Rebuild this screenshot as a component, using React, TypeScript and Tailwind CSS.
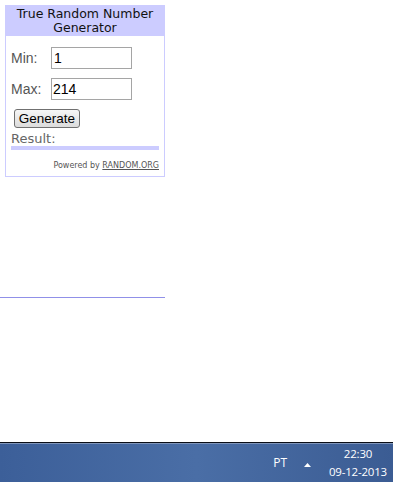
import React from "react";

function Taskbar() {
  return (
    <div className="h-[40px] w-full flex flex-col">
      <div className="h-[1px] bg-[#0b0f17]" />
      <div className="h-[1px] bg-[#7f95bb]" />
      <div className="flex-1 bg-gradient-to-r from-[#3c5f99] via-[#4a6ea6] to-[#3b5c93] flex items-center justify-end pr-[6px] text-white font-['Open_Sans',sans-serif] text-[11.5px]">
        <span className="mr-[17px] text-[12px]">PT</span>
        <svg width="7" height="5" viewBox="0 0 7 5" className="mr-[18px] mt-[5px]">
          <polygon points="3.5,0 7,4 0,4" fill="#ffffff" />
        </svg>
        <div className="flex flex-col items-center leading-[18px] tracking-[-0.2px]">
          <span>22:30</span>
          <span>09-12-2013</span>
        </div>
      </div>
    </div>
  );
}

export default function App() {
  return (
    <div className="w-[393px] h-[482px] bg-white flex flex-col relative overflow-hidden">
      <div className="pt-[5px] pl-[5px]">
        <div className="w-[160px] h-[172px] border border-[#ccccff] flex flex-col">
          <div className="bg-[#ccccff] h-[30px] text-center text-[12.5px] leading-[13.5px] text-[#111] pt-[1px] font-['DejaVu_Sans',Verdana,sans-serif]">
            <div>True Random Number</div>
            <div>Generator</div>
          </div>
          <div className="flex flex-col px-[5px] font-['Liberation_Sans',Arial,sans-serif]">
            <div className="flex items-center mt-[11px] h-[22px]">
              <span className="w-[40px] text-[14px] text-[#555]">Min:</span>
              <div className="w-[81px] h-[22px] border border-[#a5a5a5] bg-white text-[14px] text-black pl-[2px] leading-[20px]">
                1
              </div>
            </div>
            <div className="flex items-center mt-[9px] h-[22px]">
              <span className="w-[40px] text-[14px] text-[#555]">Max:</span>
              <div className="w-[81px] h-[22px] border border-[#a5a5a5] bg-white text-[14px] text-black pl-[1px] leading-[20px]">
                214
              </div>
            </div>
            <div className="mt-[9px] ml-[3px] w-[66px] h-[19px] rounded-[3px] border border-[#707070] bg-gradient-to-b from-[#f6f6f6] to-[#dcdcdc] text-[13.5px] text-black flex items-center justify-center leading-none">
              Generate
            </div>
            <div className="mt-[3px] leading-[15px] text-[#666] font-['DejaVu_Sans',Verdana,sans-serif] text-[13px]">
              Result:
            </div>
            <div className="h-[4px] bg-[#ccccff]" />
            <div className="mt-[11px] text-right text-[8px] text-[#555] font-['DejaVu_Sans',Verdana,sans-serif] leading-[10px]">
              Powered by{" "}
              <span className="underline text-[#555]">RANDOM.ORG</span>
            </div>
          </div>
        </div>
      </div>
      <div className="mt-[120px] w-[165px] h-[1px] bg-[#9090e8]" />
      <div className="flex-1" />
      <Taskbar />
    </div>
  );
}
